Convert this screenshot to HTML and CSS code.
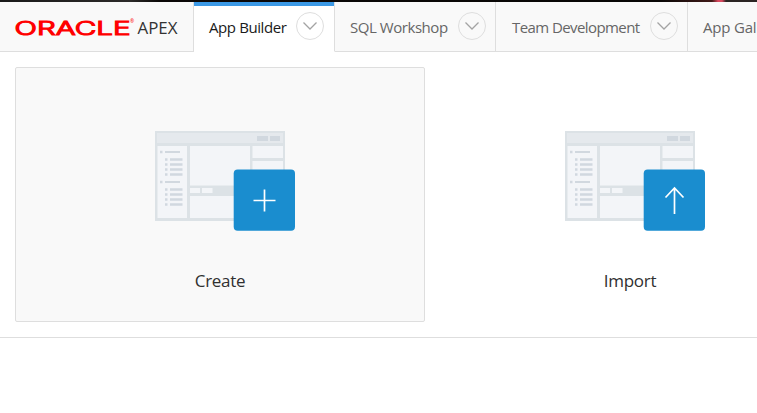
FILE: index.html
```
<!DOCTYPE html>
<html lang="en">
<head>
<meta charset="utf-8">
<title>Oracle APEX</title>
<link rel="stylesheet" href="styles.css">
</head>
<body>
<svg class="defs" width="0" height="0" aria-hidden="true">
  <symbol id="chevron" viewBox="0 0 16 10"><path d="M1.5 1.5 8 8l6.500-6.500"/></symbol>
  <symbol id="window" viewBox="0 0 140 101">
    <path fill="#dce2e6" d="M0 0h130v90H0z"/>
    <path fill="#e5e9ed" d="M2 2h126v10H2z"/>
    <path fill="#d1d8df" d="M102 5h11v5h-11zM115 5h10v5h-10z"/>
    <path fill="#f3f5f8" d="M2.500 15H32v72H2.500zM35 15h60v39.500H35zM97.500 15H128v12H97.500zM97.500 30H128v57H97.500zM35 65h60v22H35zM35 57h10v5H35zM47 57h10.500v5H47z"/>
    <path fill="#d1d8df" d="M5 19.700h2.500v2.600H5zM10 20h15v2H10zM5 49.700h2.500v2.600H5zM10 50h15v2H10z"/>
    <path stroke="#d1d8df" stroke-width="2.500" d="M10 28.500h2.500M10 33.500h2.500M10 38.500h2.500M10 43.500h2.500M10 58.500h2.500M10 63.500h2.500M10 68.500h2.500M10 73.500h2.500M15 28.500h12.500M15 33.500h12.500M15 38.500h12.500M15 43.500h12.500M15 58.500h12.500M15 63.500h12.500M15 68.500h12.500M15 73.500h12.500"/>
    <rect x="78.700" y="38.400" width="61.300" height="61.300" rx="4" fill="#1a8dcf"/>
  </symbol>
</svg>
<div class="topline"></div>
<header class="nav">
  <a class="brand">
    <svg width="164" height="24" viewBox="0 0 164 24">
      <text class="oracle" x="-.5" y="19.500" textLength="116" lengthAdjust="spacingAndGlyphs">ORACLE</text>
      <text class="reg" x="115" y="8">®</text>
      <text class="apex" x="122.500" y="18.800" textLength="40" lengthAdjust="spacingAndGlyphs">APEX</text>
    </svg>
  </a>
  <a class="tab tab-builder active"><span>App Builder</span><i class="drop"><svg width="16" height="10"><use href="#chevron"/></svg></i></a>
  <a class="tab tab-sql"><span>SQL Workshop</span><i class="drop"><svg width="16" height="10"><use href="#chevron"/></svg></i></a>
  <a class="tab tab-team"><span>Team Development</span><i class="drop"><svg width="16" height="10"><use href="#chevron"/></svg></i></a>
  <a class="tab tab-gallery"><span>App Gallery</span></a>
</header>
<main class="cards">
  <a class="card selected">
    <svg width="140" height="101" viewBox="0 0 140 101"><use href="#window"/><path class="glyph" d="M98.500 69.500h22M109.500 58.500v22"/></svg>
    <span>Create</span>
  </a>
  <a class="card">
    <svg width="140" height="101" viewBox="0 0 140 101"><use href="#window"/><path class="glyph" d="M109.500 83V57M100.500 66.500l9-9.500 9 9.500"/></svg>
    <span>Import</span>
  </a>
</main>
</body>
</html>
```
FILE: styles.css
```
* { box-sizing: border-box; }
body {
  margin: 0;
  overflow: hidden;
  background: #fff;
  font-family: "Open Sans", "Noto Sans", sans-serif;
}
.defs { position: absolute; }
.topline {
  height: 2px;
  background: linear-gradient(90deg, #1a1a1a 0, #2c2a29 130px, #0b0807 160px, #090706 660px, #401a18 712px, #d9485e 718px, #d9485e 722px, #2b2523 726px);
}
.nav {
  display: flex;
  height: 50px;
  overflow: hidden;
  background: #f9f9f9;
}
.brand, .tab {
  display: flex;
  flex: none;
  align-items: center;
  border-right: 1px solid #dedede;
  border-bottom: 1px solid #dedede;
}
.brand { width: 194px; padding-left: 15px; }
.brand svg { overflow: visible; }
.oracle { font: 300 18.500px Inter, sans-serif; fill: #f00; stroke: #f00; stroke-width: 1.100; }
.reg { font-size: 5px; fill: #f00; }
.apex { font: 17px "Open Sans", sans-serif; fill: #333; }
.tab {
  justify-content: space-between;
  padding: 0 10px 0 15px;
  font-size: 15px;
  letter-spacing: -.450px;
  color: #666;
  white-space: nowrap;
}
.tab-builder { width: 141px; letter-spacing: -.4px; }
.tab-sql { width: 161px; padding-right: 9px; }
.tab-team { width: 192px; padding: 0 9px 0 16px; letter-spacing: -.580px; }
.tab-gallery { flex: 1; min-width: 0; overflow: hidden; border-right: 0; padding-right: 0; letter-spacing: -.2px; }
.active {
  color: #1a1a1a;
  background: #fff linear-gradient(#3c99e5, #3c99e5) top / 100% 4px no-repeat;
  border-bottom-color: #fff;
}
.drop {
  display: flex;
  align-items: center;
  justify-content: center;
  width: 28px;
  height: 28px;
  margin-top: -2px;
  border: 1px solid #dedede;
  border-radius: 50%;
}
.drop svg { fill: none; stroke: #a3a3a3; stroke-width: 1.300; }
.cards {
  display: flex;
  height: 286px;
  overflow: hidden;
  padding: 15px 0 0 15px;
  border-bottom: 1px solid #dedede;
}
.card {
  display: flex;
  flex: none;
  flex-direction: column;
  align-items: center;
  width: 410px;
  height: 255px;
  padding-top: 63px;
  border: 1px solid transparent;
  border-radius: 2px;
  font-size: 17px;
  line-height: 24px;
  color: #303030;
}
.card svg { margin-left: 10px; }
.selected { background: #f9f9f9; border-color: #dedede; }
.card span { margin-top: 37px; letter-spacing: -.3px; }
.glyph { fill: none; stroke: #fff; stroke-width: 1.700; }
```
